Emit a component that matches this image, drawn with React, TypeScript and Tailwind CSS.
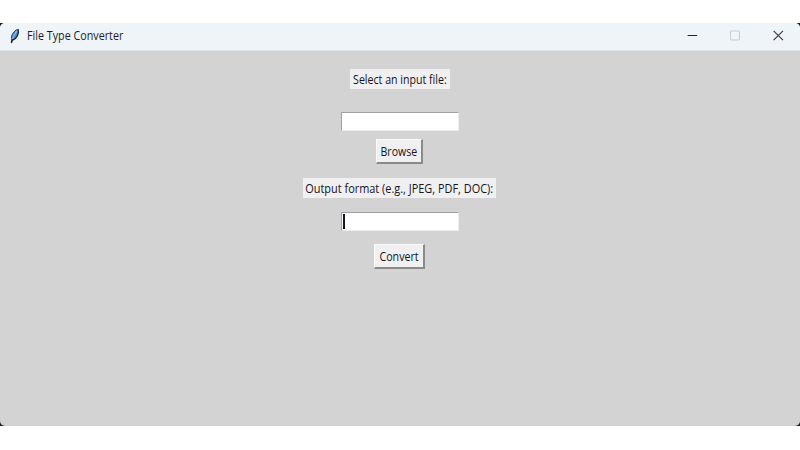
import { useState } from 'react';

const LABEL = 'flex h-5 items-center justify-center whitespace-nowrap bg-[#f0f0f0] pt-0.5';
const ENTRY =
  'h-[19px] w-[118px] border border-t-[#a0a0a0] border-l-[#a0a0a0] border-r-[#ececec] border-b-[#ececec] bg-white outline-none';
const BUTTON =
  'flex h-[25px] items-center justify-center whitespace-nowrap border-t border-l border-r-2 border-b-2 border-t-[#fafafa] border-l-[#fafafa] border-r-[#8a8a8a] border-b-[#8a8a8a] bg-[#f0f0f0] pt-px';

function Feather() {
  return (
    <svg className="h-4 w-3" viewBox="0 0 12 16">
      <path d="M9.2 1.2C6.4 1.8 3 5.2 2.4 9l.6 2.6-.8 3.2h.6l1-2.8C7.4 10.8 9.9 6 9.2 1.2Z" fill="#4b87c4" stroke="#3b4250" strokeWidth="0.9" />
      <path d="M8.2 3C6 5 4.4 8 3.6 11" fill="none" stroke="#8fbde6" strokeWidth="1.1" />
      <path d="M9.3 1.6C9.8 6 7.6 10.2 4 12M3.2 11l-.9 3.6" fill="none" stroke="#20242c" strokeWidth="1.2" />
    </svg>
  );
}

function TitleBar() {
  return (
    <header className="flex h-7 items-center justify-between border-b border-[#e2e5e8] bg-[#eff4f9] pr-[16px] pb-0.5 pl-[9px]">
      <div className="flex items-center gap-[6px]">
        <Feather />
        <span className="origin-left scale-x-[0.895] whitespace-nowrap pt-px text-[#1c1c1c]">File Type Converter</span>
      </div>
      <div className="flex items-center gap-[31px]">
        <svg className="h-3 w-3" viewBox="0 0 12 12" fill="none" stroke="#282325">
          <path d="M1.6 5.5h9.6" strokeWidth="1.2" />
        </svg>
        <svg className="h-3 w-3" viewBox="0 0 12 12" fill="none" stroke="#c9cccf">
          <rect x="1.5" y="1" width="9" height="9" rx="0.8" />
        </svg>
        <svg className="h-3 w-3" viewBox="0 0 12 12" fill="none" stroke="#403d40">
          <path d="M1.6 .8l9.4 9.4M11 .8l-9.4 9.4" strokeWidth="1.2" />
        </svg>
      </div>
    </header>
  );
}

export default function App() {
  const [file, setFile] = useState('');
  const [format, setFormat] = useState('');
  return (
    <div className="h-[450px] w-[800px] overflow-hidden bg-white pt-[23px] font-['Open_Sans','Noto_Sans',sans-serif] text-[12px] leading-4 text-[#17131f]">
      <div className="h-[403px] bg-[#1b1b1b]">
        <div className="flex h-full flex-col overflow-hidden rounded-[5px] bg-[#d3d3d3]">
          <TitleBar />
          <main className="flex flex-col items-center pt-[18px]">
            <div className={`${LABEL} w-[100px]`}>
              <span className="scale-x-[0.885]">Select an input file:</span>
            </div>
            <input className={`${ENTRY} mt-[23px] block px-0.5`} value={file} onChange={(e) => setFile(e.target.value)} />
            <button className={`${BUTTON} mt-[8px] mr-px w-[47px]`}>
              <span className="scale-x-[0.88]">Browse</span>
            </button>
            <div className={`${LABEL} mt-[14px] mr-px w-[193px]`}>
              <span className="scale-x-[0.91]">Output format (e.g., JPEG, PDF, DOC):</span>
            </div>
            <div className={`${ENTRY} mt-[14px] flex items-center`}>
              <span className="ml-px h-[15px] w-0.5 shrink-0 bg-[#17131f]" />
              <input
                className="h-4 w-full min-w-0 bg-transparent outline-none"
                value={format}
                onChange={(e) => setFormat(e.target.value)}
              />
            </div>
            <button className={`${BUTTON} mt-[13px] mr-px w-[51px]`}>
              <span className="scale-x-[0.89]">Convert</span>
            </button>
          </main>
        </div>
      </div>
    </div>
  );
}
